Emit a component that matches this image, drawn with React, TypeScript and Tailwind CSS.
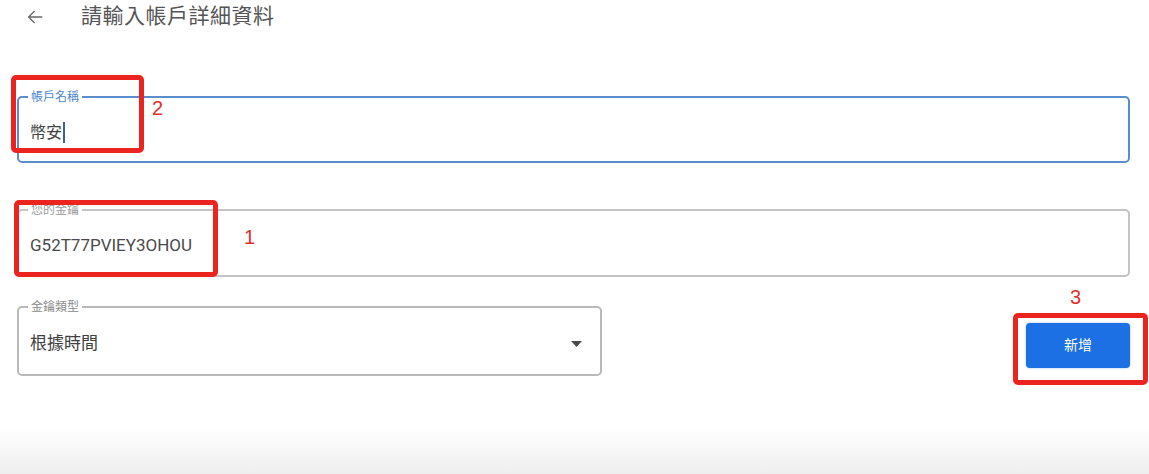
const font = 'font-["Roboto","Noto_Sans_CJK_TC",sans-serif]';

export default function App() {
  return (
    <div className={`relative w-[1149px] h-[474px] bg-white flex flex-col overflow-hidden ${font}`}>
      {/* Header */}
      <div className="h-[34px] flex items-center pl-[24px] gap-[35px]">
        <svg width="22" height="22" viewBox="0 0 24 24" className="text-[#6a6a6a]">
          <path fill="currentColor" d="M20 11.2H6.9l5.2-5.2-1-1L4 12l7.1 7 1-1-5.2-5.2H20z" />
        </svg>
        <h1 className="text-[21px] text-[#555] tracking-[0.5px]">請輸入帳戶詳細資料</h1>
      </div>

      {/* Form */}
      <div className="pl-[17px] pr-[19px] mt-[56px] flex flex-col">
        <fieldset className="h-[73px] border-2 border-[#5b8ccb] rounded-[5px] px-[11px]">
          <legend className="ml-[-2px] px-[3px] text-[12px] leading-[14px] text-[#4f86cc]">帳戶名稱</legend>
          <div className="h-[57px] flex items-center text-[16px] text-[#444]">
            幣安
            <span className="ml-px w-[2px] h-[21px] bg-[#3d5f96]" />
          </div>
        </fieldset>

        <fieldset className="mt-[40px] h-[74px] border-2 border-[#c4c4c4] rounded-[5px] px-[11px]">
          <legend className="ml-[-2px] px-[3px] text-[12px] leading-[14px] text-[#9a9a9a]">您的金鑰</legend>
          <div className="h-[58px] flex items-center text-[17px] text-[#4a4a4a]">G52T77PVIEY3OHOU</div>
        </fieldset>

        <div className="mt-[23px] flex items-start justify-between">
          <fieldset className="w-[585px] h-[76px] border-2 border-[#b9b9b9] rounded-[5px] pl-[11px] pr-[18px]">
            <legend className="ml-[-2px] px-[3px] text-[12px] leading-[14px] text-[#8a8a8a]">金鑰類型</legend>
            <div className="h-[60px] flex items-center justify-between text-[17px] text-[#3f3f3f]">
              根據時間
              <svg width="11" height="6" viewBox="0 0 11 6">
                <path d="M0 0h11L5.5 6z" fill="#4a4a4a" />
              </svg>
            </div>
          </fieldset>
          <button className="mt-[23px] w-[104px] h-[45px] rounded-[4px] bg-[#1c70e3] text-white text-[14px] shadow-[0_0_2px_rgba(30,110,220,0.5)]">
            新增
          </button>
        </div>
      </div>

      {/* Bottom fade */}
      <div className="mt-auto h-[46px] bg-gradient-to-b from-white to-[#eeeeee]" />

      {/* Annotations */}
      <div className="absolute left-[11px] top-[75px] w-[133px] h-[78px] border-[5px] border-[#ec2420] rounded-[5px]" />
      <span className="absolute left-[152px] top-[96px] text-[20px] leading-[24px] text-[#e0302a] font-['Liberation_Sans',sans-serif]">2</span>
      <div className="absolute left-[14px] top-[200px] w-[204px] h-[77px] border-[5px] border-[#ec2420] rounded-[5px]" />
      <span className="absolute left-[244px] top-[225px] text-[20px] leading-[24px] text-[#e0302a] font-['Liberation_Sans',sans-serif]">1</span>
      <div className="absolute left-[1013px] top-[313px] w-[135px] h-[72px] border-[5px] border-[#ec2420] rounded-[5px]" />
      <span className="absolute left-[1070px] top-[285px] text-[20px] leading-[24px] text-[#e0302a] font-['Liberation_Sans',sans-serif]">3</span>
    </div>
  );
}
